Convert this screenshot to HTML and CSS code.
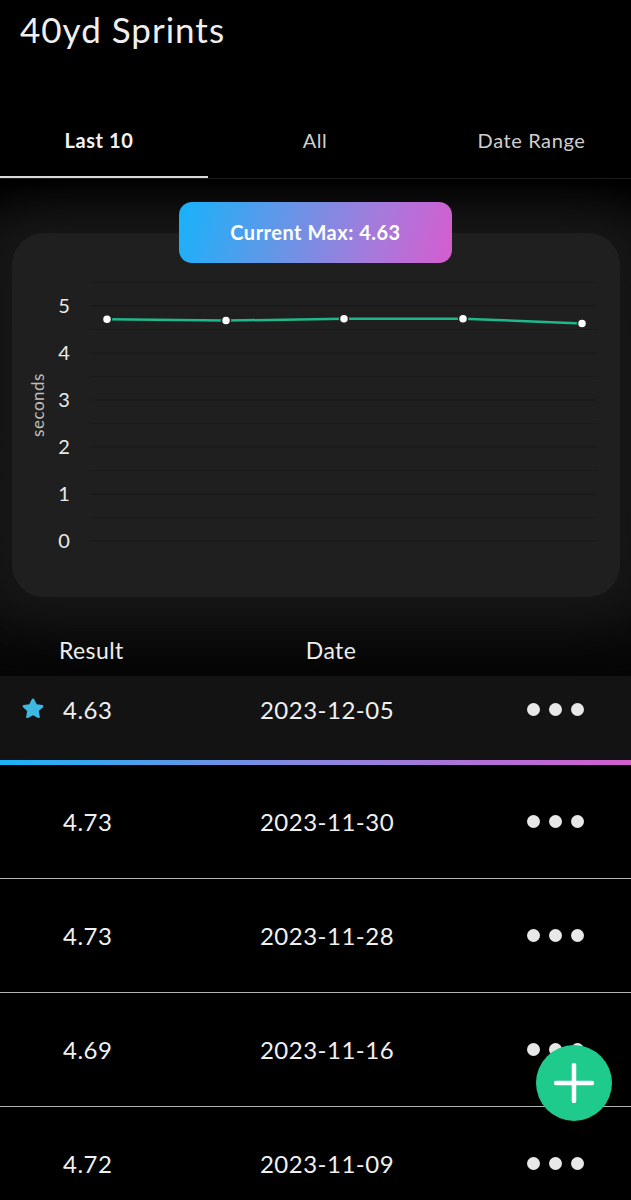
FILE: index.html
```html
<!DOCTYPE html>
<html>
<head>
   <meta charset="utf-8">
   <title>40yd Sprints</title>
   <link rel="stylesheet" href="styles.css">
</head>
<body>

   <div class="title">40yd Sprints</div>

   <div class="tabs">
      <div class="tab active">Last 10</div>
      <div class="tab">All</div>
      <div class="tab">Date Range</div>
   </div>

   <div class="chartArea">
      <div class="maxPill">Current Max: 4.63</div>
      <div class="chartCard">
         <svg class="chart" width="608" height="364" viewBox="0 0 608 364">
            <g class="grid">
               <line x1="78" y1="49.5" x2="585" y2="49.5" />
               <line x1="78" y1="73" x2="585" y2="73" />
               <line x1="78" y1="96.5" x2="585" y2="96.5" />
               <line x1="78" y1="120" x2="585" y2="120" />
               <line x1="78" y1="143.5" x2="585" y2="143.5" />
               <line x1="78" y1="167" x2="585" y2="167" />
               <line x1="78" y1="190.5" x2="585" y2="190.5" />
               <line x1="78" y1="214" x2="585" y2="214" />
               <line x1="78" y1="237.5" x2="585" y2="237.5" />
               <line x1="78" y1="261" x2="585" y2="261" />
               <line x1="78" y1="284.5" x2="585" y2="284.5" />
               <line x1="78" y1="308" x2="585" y2="308" />
            </g>
            <g class="axisLabels">
               <text x="52" y="80">5</text>
               <text x="52" y="127">4</text>
               <text x="52" y="174">3</text>
               <text x="52" y="221">2</text>
               <text x="52" y="268">1</text>
               <text x="52" y="315">0</text>
            </g>
            <text class="axisTitle" x="0" y="0" transform="translate(32 172) rotate(-90)">seconds</text>
            <polyline class="line" points="95,86.2 214,87.6 332,85.7 451,85.7 570,90.4" />
            <g class="dots">
               <circle cx="95" cy="86.2" r="4.5" />
               <circle cx="214" cy="87.6" r="4.5" />
               <circle cx="332" cy="85.7" r="4.5" />
               <circle cx="451" cy="85.7" r="4.5" />
               <circle cx="570" cy="90.4" r="4.5" />
            </g>
         </svg>
      </div>
      <div class="listHead">
         <span class="colVal">Result</span>
         <span class="colDate">Date</span>
      </div>
   </div>

   <div class="row best">
      <span class="colStar">
         <svg width="26" height="26" viewBox="0 0 24 24">
            <path d="M12 2.2c.5 0 .9.3 1.1.7l2.3 4.8 5.2.7c.9.1 1.3 1.2.6 1.9l-3.8 3.6.9 5.2c.2.9-.8 1.6-1.6 1.2L12 17.8l-4.7 2.5c-.8.4-1.8-.3-1.6-1.2l.9-5.2-3.8-3.6c-.7-.7-.3-1.8.6-1.9l5.2-.7 2.3-4.8c.2-.4.6-.7 1.1-.7z" fill="#3db8e3" />
         </svg>
      </span>
      <span class="colVal">4.63</span>
      <span class="colDate">2023-12-05</span>
      <span class="more"><i></i><i></i><i></i></span>
   </div>

   <div class="row">
      <span class="colStar"></span>
      <span class="colVal">4.73</span>
      <span class="colDate">2023-11-30</span>
      <span class="more"><i></i><i></i><i></i></span>
   </div>

   <div class="row">
      <span class="colStar"></span>
      <span class="colVal">4.73</span>
      <span class="colDate">2023-11-28</span>
      <span class="more"><i></i><i></i><i></i></span>
   </div>

   <div class="row">
      <span class="colStar"></span>
      <span class="colVal">4.69</span>
      <span class="colDate">2023-11-16</span>
      <span class="more"><i></i><i></i><i></i></span>
   </div>

   <div class="row">
      <span class="colStar"></span>
      <span class="colVal">4.72</span>
      <span class="colDate">2023-11-09</span>
      <span class="more"><i></i><i></i><i></i></span>
   </div>

   <!-- add result button -->
   <div class="fab">
      <svg width="40" height="40" viewBox="0 0 40 40">
         <path d="M20 2v36M2 20h36" stroke="#fff" stroke-width="4.5" stroke-linecap="round" />
      </svg>
   </div>

</body>
</html>
```

FILE: styles.css
```css
body {
   margin: 0;
   background: #000;
   color: #eee;
   font-family: Lato, "Open Sans", sans-serif;
   overflow: hidden;
}
.title {
   height: 103px;
   box-sizing: border-box;
   padding: 8px 0 0 20px;
   font-size: 35px;
   line-height: 42px;
   letter-spacing: 1px;
   color: #efefef;
}
.tabs {
   display: grid;
   grid-template-columns: 198px 234px 1fr;
   border-bottom: 1px solid #1c1c1c;
   background: linear-gradient(#d8d8d8, #d8d8d8) no-repeat 0 100% / 208px 2px;
}
.tab {
   height: 75px;
   line-height: 75px;
   text-align: center;
   font-size: 20px;
   letter-spacing: 0.6px;
   color: #cfcfcf;
}
.tab.active {
   color: #f2f2f2;
   font-weight: bold;
}
.chartArea {
   padding-top: 23px;
   background: linear-gradient(#000 0, #101010 12%, #111 80%, #050505 100%);
   overflow: hidden;
}
.maxPill {
   position: relative;
   z-index: 2;
   width: 273px;
   height: 61px;
   margin: 0 auto;
   border-radius: 13px;
   background: linear-gradient(105deg, #17b2fb 0%, #5f98e8 35%, #a47bdc 70%, #d65ccf 100%);
   color: #fff;
   font-size: 20px;
   font-weight: bold;
   letter-spacing: 0.5px;
   line-height: 61px;
   text-align: center;
}
.chartCard {
   margin: -30px 11px 0 12px;
   height: 364px;
   border-radius: 32px;
   background: #1f1f1f;
   box-shadow: 0 0 45px 22px #171717;
}
.chart {
   display: block;
}
.grid line {
   stroke: #191919;
   stroke-width: 1.2;
}
.axisLabels text {
   fill: #eaeaea;
   font-size: 20px;
   text-anchor: middle;
}
.axisTitle {
   fill: #bdbdbd;
   font-size: 17px;
   letter-spacing: 0.5px;
   text-anchor: middle;
}
.line {
   fill: none;
   stroke: #1fb88a;
   stroke-width: 2.5;
}
.dots circle {
   fill: #fff;
   stroke: #222;
   stroke-width: 1.5;
}
.listHead {
   display: flex;
   height: 46px;
   margin-top: 30px;
   padding-bottom: 3px;
   align-items: center;
   font-size: 23px;
   letter-spacing: 0.4px;
   color: #eee;
}
.listHead .colVal {
   width: 246px;
   padding-left: 59px;
}
.listHead .colDate {
   width: 52px;
}
.row {
   display: flex;
   align-items: center;
   height: 113px;
   border-top: 1px solid #b4b4b4;
   font-size: 24px;
   letter-spacing: 0.5px;
   color: #f0f0f0;
}
.row.best {
   height: 84px;
   padding-bottom: 18px;
   box-sizing: border-box;
   background: #131313;
   border-top: none;
}
.best + .row {
   border-top: 5px solid transparent;
   border-image: linear-gradient(90deg, #19b3f7, #8b86e0 50%, #d45dcf) 1;
}
.colStar {
   display: flex;
   width: 63px;
   justify-content: center;
   padding-left: 3px;
   box-sizing: border-box;
}
.colVal {
   width: 150px;
}
.colDate {
   width: 228px;
   text-align: center;
}
.more {
   display: flex;
   gap: 9px;
   margin-left: auto;
   margin-right: 47px;
}
.more i {
   width: 13px;
   height: 13px;
   border-radius: 50%;
   background: #e8e8e8;
}
.fab {
   position: fixed;
   left: 536px;
   top: 1045px;
   width: 76px;
   height: 76px;
   border-radius: 50%;
   background: #1ecb8c;
   display: flex;
   align-items: center;
   justify-content: center;
}
```
